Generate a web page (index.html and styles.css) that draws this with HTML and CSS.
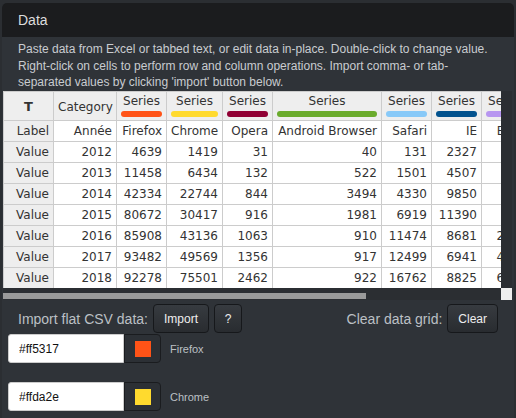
FILE: index.html
```html
<!DOCTYPE html>
<html lang="en">
<head>
    <meta charset="UTF-8">
    <meta name="viewport" content="width=device-width, initial-scale=1.0">
    <link rel="stylesheet" href="styles.css">
    <title>Data</title>
</head>
<body>
    <div class="panel">
        <div class="panel-head">Data</div>

        <p class="intro">Paste data from Excel or tabbed text, or edit data in-place. Double-click to change value. Right-click on cells to perform row and column operations. Import comma- or tab-separated values by clicking 'import' button below.</p>

        <div class="grid">
            <div class="grid-view">
                <table class="sheet">
                    <colgroup>
                        <col style="width: 50px">
                        <col style="width: 63px">
                        <col style="width: 50px">
                        <col style="width: 56px">
                        <col style="width: 50px">
                        <col style="width: 109px">
                        <col style="width: 50px">
                        <col style="width: 50px">
                        <col style="width: 50px">
                        <col style="width: 60px">
                    </colgroup>
                    <tr class="series-row">
                        <th class="type">T</th>
                        <th class="plain">Category</th>
                        <th>Series<span class="bar firefox"></span></th>
                        <th>Series<span class="bar chrome"></span></th>
                        <th>Series<span class="bar opera"></span></th>
                        <th>Series<span class="bar android"></span></th>
                        <th>Series<span class="bar safari"></span></th>
                        <th>Series<span class="bar ie"></span></th>
                        <th>Series<span class="bar edge"></span></th>
                        <th>Series<span class="bar other"></span></th>
                    </tr>
                    <tr>
                        <th>Label</th>
                        <td>Année</td><td>Firefox</td><td>Chrome</td><td>Opera</td><td>Android Browser</td><td>Safari</td><td>IE</td><td>Edge</td><td>Other</td>
                    </tr>
                    <tr>
                        <th>Value</th>
                        <td>2012</td><td>4639</td><td>1419</td><td>31</td><td>40</td><td>131</td><td>2327</td><td></td><td>412</td>
                    </tr>
                    <tr>
                        <th>Value</th>
                        <td>2013</td><td>11458</td><td>6434</td><td>132</td><td>522</td><td>1501</td><td>4507</td><td></td><td>530</td>
                    </tr>
                    <tr>
                        <th>Value</th>
                        <td>2014</td><td>42334</td><td>22744</td><td>844</td><td>3494</td><td>4330</td><td>9850</td><td></td><td>688</td>
                    </tr>
                    <tr>
                        <th>Value</th>
                        <td>2015</td><td>80672</td><td>30417</td><td>916</td><td>1981</td><td>6919</td><td>11390</td><td></td><td>754</td>
                    </tr>
                    <tr>
                        <th>Value</th>
                        <td>2016</td><td>85908</td><td>43136</td><td>1063</td><td>910</td><td>11474</td><td>8681</td><td>2318</td><td>801</td>
                    </tr>
                    <tr>
                        <th>Value</th>
                        <td>2017</td><td>93482</td><td>49569</td><td>1356</td><td>917</td><td>12499</td><td>6941</td><td>4127</td><td>866</td>
                    </tr>
                    <tr>
                        <th>Value</th>
                        <td>2018</td><td>92278</td><td>75501</td><td>2462</td><td>922</td><td>16762</td><td>8825</td><td>6204</td><td>902</td>
                    </tr>
                </table>
            </div>
            <div class="vbar"></div>
            <div class="hbar"><div class="thumb"></div></div>
            <div class="grid-corner"></div>
        </div>

        <div class="csv-row">
            <span class="ctl-label">Import flat CSV data:</span>
            <button class="btn">Import</button>
            <button class="btn btn-help">?</button>
            <span class="spacer"></span>
            <span class="ctl-label">Clear data grid:</span>
            <button class="btn">Clear</button>
        </div>

        <div class="colour-row">
            <input class="colour-text" type="text" value="#ff5317">
            <button class="swatch"><span class="chip firefox"></span></button>
            <span class="colour-name">Firefox</span>
        </div>

        <div class="colour-row">
            <input class="colour-text" type="text" value="#ffda2e">
            <button class="swatch"><span class="chip chrome"></span></button>
            <span class="colour-name">Chrome</span>
        </div>
    </div>
</body>
</html>
```

FILE: styles.css
```css
body {
    margin: 0;
    padding: 0;
    background-color: #2b2e32;
    font-family: "Liberation Sans", Arial, sans-serif;
    overflow: hidden;
}

.panel {
    margin: 3px 2px 0 2px;
    background-color: #2f3338;
    border-radius: 5px 5px 0 0;
    overflow: hidden;
    height: 420px;
}

.panel-head {
    height: 34px;
    line-height: 34px;
    padding-left: 16px;
    background-color: #1b1c1e;
    color: #dddddd;
    font-size: 14px;
}

.intro {
    margin: 0;
    padding: 4px 14px 0 16px;
    font-size: 12px;
    line-height: 16.6px;
    color: #c9ccd0;
    height: 50px;
}

/* data grid + fake scrollbars */
.grid {
    margin-left: 1px;
    width: 509px;
    display: grid;
    grid-template-columns: 498px 11px;
    grid-template-rows: 197px 12px;
}

.grid-view {
    overflow: hidden;
}

.vbar {
    background-color: #2b2e32;
}

.hbar {
    background-color: #2b2e32;
}

.thumb {
    margin-top: 5px;
    width: 363px;
    height: 6px;
    background-color: #9a9a9a;
}

.grid-corner {
    background-color: #eeeeee;
}

.sheet {
    table-layout: fixed;
    width: 588px;
    border-collapse: collapse;
    font-family: "DejaVu Sans", Verdana, sans-serif;
    font-size: 12px;
    color: #333333;
    background-color: #ffffff;
}

.sheet th,
.sheet td {
    border: 1px solid #cccccc;
    height: 20px;
    padding: 0 4px;
    text-align: right;
    white-space: nowrap;
    overflow: hidden;
    font-weight: normal;
}

.sheet th {
    background-color: #eeeeee;
}

.series-row th {
    height: 23px;
    padding: 2px 4px;
    text-align: center;
    vertical-align: top;
    line-height: 14px;
}

.series-row th.plain,
.series-row th.type {
    vertical-align: middle;
    padding-top: 3px;
}

.series-row th.type {
    font-weight: bold;
    font-size: 13px;
}

.bar {
    display: block;
    height: 6px;
    margin: 3px 0 0 0;
    border-radius: 3px;
}

.firefox { background-color: #ff5317; }
.chrome { background-color: #ffda2e; }
.opera { background-color: #900034; }
.android { background-color: #6aab2c; }
.safari { background-color: #88c9f8; }
.ie { background-color: #02528e; }
.edge { background-color: #b796f0; }
.other { background-color: #3d9a8c; }

/* controls under the grid */
.csv-row {
    display: flex;
    align-items: center;
    margin-top: 4px;
    padding: 0 16px;
    gap: 5px;
}

.spacer {
    flex: 1;
}

.ctl-label {
    font-size: 14px;
    color: #bcc0c5;
}

.btn {
    height: 29px;
    padding: 0 10px;
    font-family: "Liberation Sans", Arial, sans-serif;
    font-size: 12px;
    color: #eeeeee;
    background: linear-gradient(#373b40, #292c30);
    border: 1px solid #16181b;
    border-radius: 4px;
}

.btn-help {
    width: 28px;
    padding: 0;
}

.colour-row {
    display: flex;
    align-items: center;
    margin: 1px 0 19px 6px;
}

.colour-text {
    box-sizing: border-box;
    width: 116px;
    height: 29px;
    margin: 0;
    padding: 0 10px;
    font-family: "Liberation Sans", Arial, sans-serif;
    font-size: 12px;
    color: #111111;
    background-color: #ffffff;
    border: 1px solid #cccccc;
    border-radius: 3px 0 0 3px;
    outline: none;
}

.swatch {
    box-sizing: border-box;
    width: 37px;
    height: 29px;
    margin: 0;
    padding: 0;
    display: flex;
    align-items: center;
    justify-content: center;
    background-color: #2c3035;
    border: 1px solid #1a1c1f;
    border-radius: 0 4px 4px 0;
}

.chip {
    width: 16px;
    height: 16px;
}

.colour-name {
    margin-left: 9px;
    font-size: 11px;
    color: #bcc0c5;
}
```
